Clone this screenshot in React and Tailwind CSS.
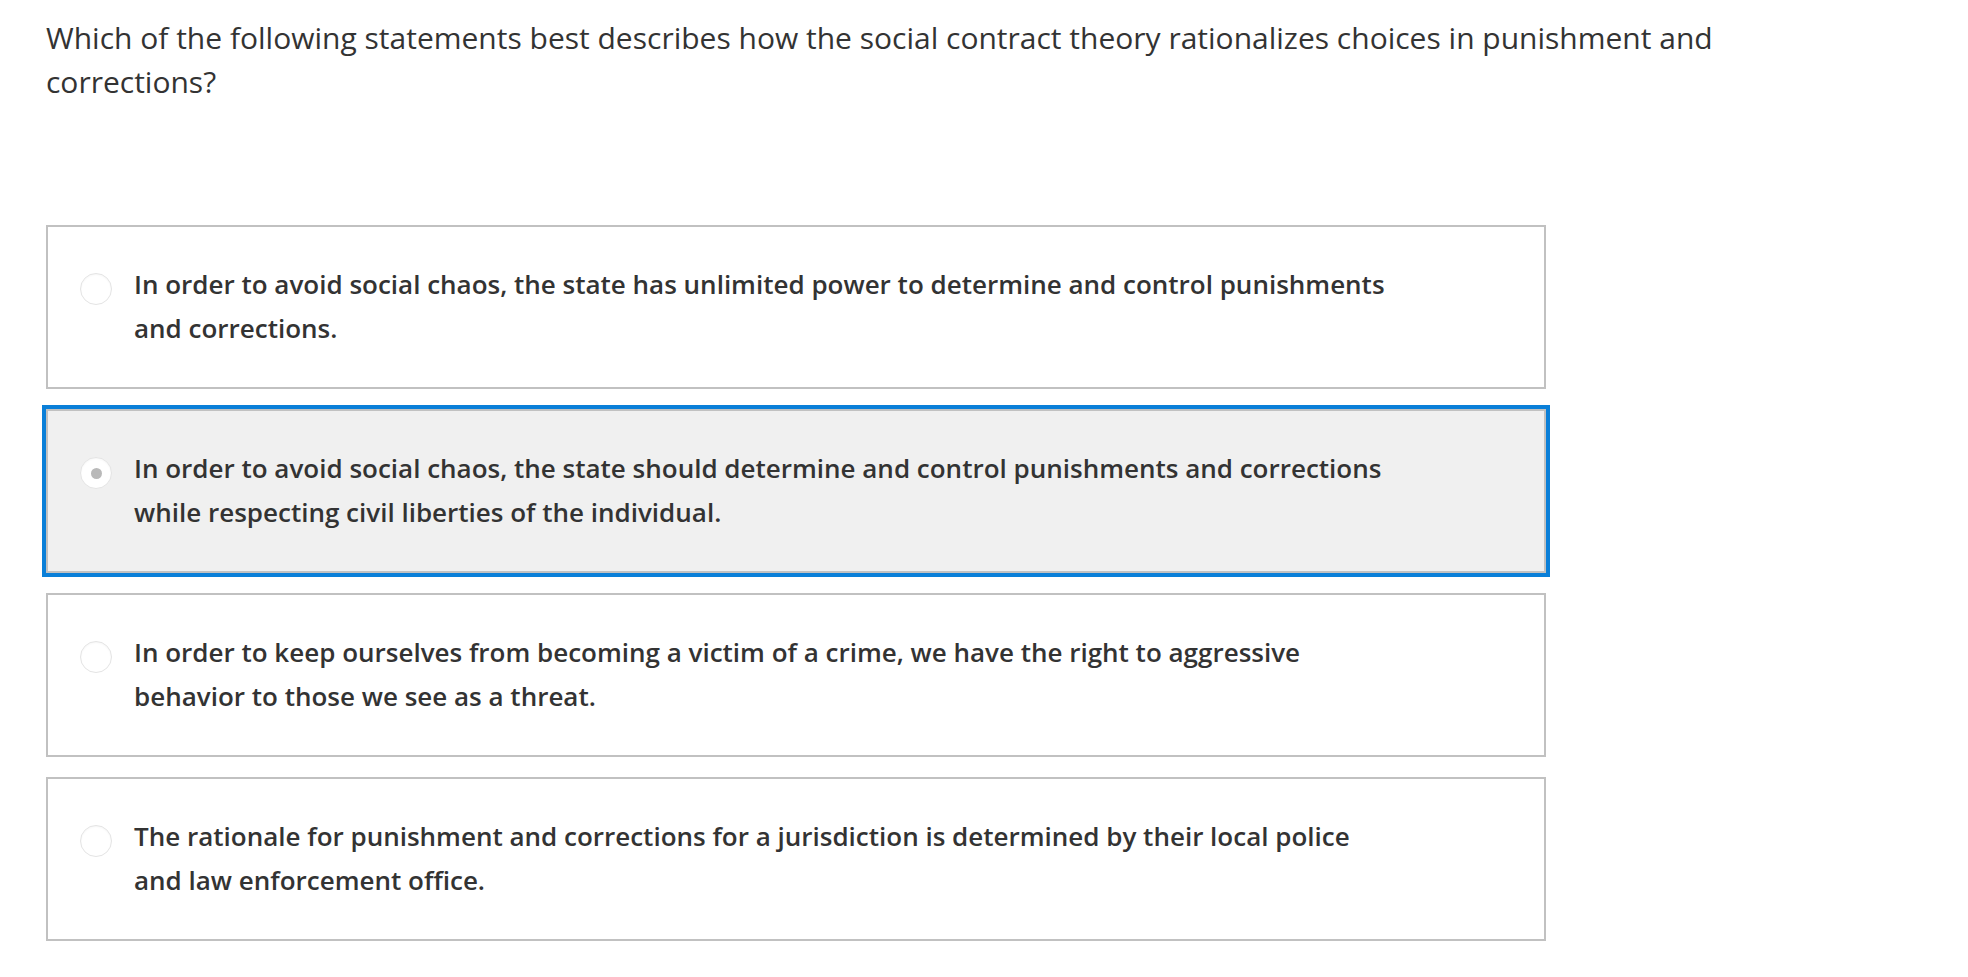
import React, { useState } from 'react';

const options = [
  'In order to avoid social chaos, the state has unlimited power to determine and control punishments and corrections.',
  'In order to avoid social chaos, the state should determine and control punishments and corrections while respecting civil liberties of the individual.',
  'In order to keep ourselves from becoming a victim of a crime, we have the right to aggressive behavior to those we see as a threat.',
  'The rationale for punishment and corrections for a jurisdiction is determined by their local police and law enforcement office.',
];

export default function App() {
  const [selected, setSelected] = useState(1);

  return (
    <div className="min-h-screen bg-white px-[46px] pt-[16px] font-['Open_Sans',sans-serif] text-[#333333]">
      <p className="max-w-[1760px] text-[30px] leading-[44px]">
        Which of the following statements best describes how the social contract theory rationalizes choices in punishment and corrections?
      </p>

      <div className="mt-[121px] flex w-[1500px] flex-col gap-5">
        {options.map((text, i) => {
          const active = selected === i;
          return (
            <label
              key={i}
              onClick={() => setSelected(i)}
              className={`flex cursor-pointer items-start border-2 border-[#c1c1c1] px-8 pt-[35px] pb-[37px] ${active ? 'bg-[#f0f0f0] ring-4 ring-[#0a7fd8]' : 'bg-white'}`}
            >
              <span className="mt-[11px] flex h-8 w-8 shrink-0 items-center justify-center rounded-full border border-[#e4e4e4] bg-white shadow-[inset_0_1px_2px_rgba(0,0,0,0.04)]">
                {active && <span className="h-[11px] w-[11px] rounded-full bg-[#b9b9b9]" />}
              </span>
              <span className="ml-[22px] max-w-[1256px] text-[26px] font-semibold leading-[44px] text-[#333333]">
                {text}
              </span>
            </label>
          );
        })}
      </div>
    </div>
  );
}
